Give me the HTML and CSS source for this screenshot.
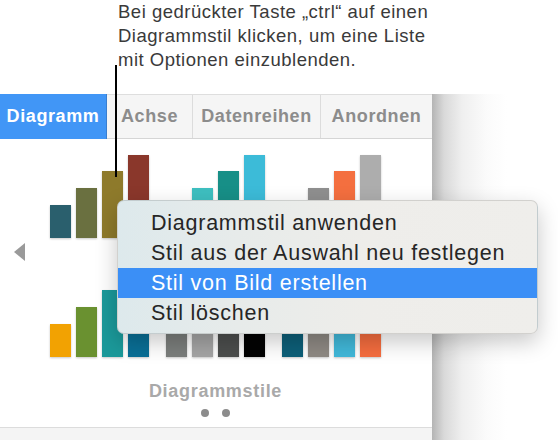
FILE: index.html
```html
<!DOCTYPE html>
<html lang="de">
<head>
<meta charset="utf-8">
<title>Diagrammstile</title>
<link rel="stylesheet" href="styles.css">
</head>
<body>
<div class="page">
  <div class="callout">Bei gedrückter Taste „ctrl“ auf einen<br>Diagrammstil klicken, um eine Liste<br>mit Optionen einzublenden.</div>
  <div class="main">
    <div class="panel">
      <div class="tabs">
        <div class="tab tab-active tab-1">Diagramm</div>
        <div class="tab tab-2">Achse</div>
        <div class="tab tab-3">Datenreihen</div>
        <div class="tab tab-4">Anordnen</div>
      </div>
      <div class="content">
        <div class="nav"><span class="arrow"></span></div>
        <div class="styles">
          <div class="grid">
            <div class="group">
              <span class="bar h1 c-1a"></span><span class="bar h2 c-1b"></span><span class="bar h3 c-1c"></span><span class="bar h4 c-1d"></span>
            </div>
            <div class="group">
              <span class="bar h1 c-2a"></span><span class="bar h2 c-2b"></span><span class="bar h3 c-2c"></span><span class="bar h4 c-2d"></span>
            </div>
            <div class="group">
              <span class="bar h1 c-3a"></span><span class="bar h2 c-3b"></span><span class="bar h3 c-3c"></span><span class="bar h4 c-3d"></span>
            </div>
            <div class="group">
              <span class="bar h1 c-4a"></span><span class="bar h2 c-4b"></span><span class="bar h3 c-4c"></span><span class="bar h4 c-4d"></span>
            </div>
            <div class="group">
              <span class="bar h1 c-5a"></span><span class="bar h2 c-5b"></span><span class="bar h3 c-5c"></span><span class="bar h4 c-5d"></span>
            </div>
            <div class="group">
              <span class="bar h1 c-6a"></span><span class="bar h2 c-6b"></span><span class="bar h3 c-6c"></span><span class="bar h4 c-6d"></span>
            </div>
          </div>
          <div class="label">Diagrammstile</div>
          <div class="dots"><span class="dot"></span><span class="dot"></span></div>
        </div>
      </div>
      <div class="footer"></div>
    </div>
    <div class="shade"></div>
  </div>
  <div class="pointer"></div>
  <div class="menu">
    <div class="item">Diagrammstil anwenden</div>
    <div class="item">Stil aus der Auswahl neu festlegen</div>
    <div class="item item-active">Stil von Bild erstellen</div>
    <div class="item">Stil löschen</div>
  </div>
</div>
</body>
</html>
```
FILE: styles.css
```css
html, body {
  margin: 0;
  padding: 0;
  background: #ffffff;
}
body {
  width: 558px;
  height: 440px;
  overflow: hidden;
  font-family: "Liberation Sans", Arial, sans-serif;
}
.page {
  position: relative;
  width: 558px;
  height: 440px;
}
.callout {
  height: 94px;
  box-sizing: border-box;
  padding-left: 118px;
  padding-top: 0;
  font-size: 18.5px;
  line-height: 24px;
  letter-spacing: 0.5px;
  color: #3a3a3a;
}
.main {
  display: flex;
  height: 346px;
}
.panel {
  width: 432px;
  display: flex;
  flex-direction: column;
  background: #ffffff;
}
.shade {
  flex: 1;
  background: linear-gradient(to right, #b4b4b4 0px, #d9d9d9 12px, #efefef 30px, #fbfbfb 55px, #ffffff 75px);
}
.tabs {
  display: flex;
  height: 45px;
  box-sizing: border-box;
  border-top: 1px solid #dedede;
  border-bottom: 1px solid #d5d5d5;
  background: #f5f5f5;
}
.tab {
  display: flex;
  align-items: center;
  justify-content: center;
  font-size: 18px;
  font-weight: bold;
  letter-spacing: 0.6px;
  color: #8c8c8c;
  border-left: 1px solid #dcdcdc;
}
.tab-active {
  background: #4196f6;
  color: #ffffff;
  border-left: none;
  margin-top: -1px;
  margin-bottom: -1px;
  border-right: 1px solid #3a7fd0;
}
.tab-1 { width: 106px; }
.tab-2 { width: 85px; border-left: none; }
.tab-3 { width: 127px; }
.tab-4 { flex: 1; }
.content {
  flex: 1;
  display: flex;
}
.nav {
  width: 49px;
}
.arrow {
  display: block;
  margin-top: 104px;
  margin-left: 14px;
  width: 0;
  height: 0;
  border-top: 9px solid transparent;
  border-bottom: 9px solid transparent;
  border-right: 11px solid #9a9a9a;
}
.styles {
  width: 333px;
  display: flex;
  flex-direction: column;
  align-items: center;
  padding-top: 15px;
}
.grid {
  display: grid;
  grid-template-columns: repeat(3, 99px);
  column-gap: 17px;
  row-gap: 35px;
}
.group {
  display: flex;
  align-items: flex-end;
  gap: 5px;
  height: 84px;
}
.bar {
  display: block;
  width: 21px;
  box-shadow: 0 1px 2px rgba(0, 0, 0, 0.22);
}
.h1 { height: 33px; }
.h2 { height: 50px; }
.h3 { height: 67px; }
.h4 { height: 83px; }
.c-1a { background: #2a5f6d; }
.c-1b { background: #6a7040; }
.c-1c { background: #8e7a2b; }
.c-1d { background: #8a372b; }
.c-2a { background: #2c8b98; }
.c-2b { background: #3ebfc0; }
.c-2c { background: #178f87; }
.c-2d { background: #3cbbd8; }
.c-3a { background: #6f6f6f; }
.c-3b { background: #8f8f8f; }
.c-3c { background: #f46f3f; }
.c-3d { background: #adadad; }
.c-4a { background: #f2a202; }
.c-4b { background: #6a9130; }
.c-4c { background: #1b999a; }
.c-4d { background: #0a6f96; }
.c-5a { background: #7b7e7c; }
.c-5b { background: #a4a4a4; }
.c-5c { background: #4c4e4d; }
.c-5d { background: #030303; }
.c-6a { background: #0d5f78; }
.c-6b { background: #8e8983; }
.c-6c { background: #41b8d9; }
.c-6d { background: #f56d3f; }
.label {
  margin-top: 24px;
  font-size: 18px;
  line-height: 20px;
  font-weight: bold;
  letter-spacing: 0.7px;
  color: #a9a9a9;
}
.dots {
  display: flex;
  gap: 13px;
  margin-top: 8px;
}
.dot {
  display: block;
  width: 8px;
  height: 8px;
  border-radius: 50%;
  background: #8c8c8c;
}
.footer {
  height: 13px;
  box-sizing: border-box;
  border-top: 1px solid #dcdcdc;
  background: #f4f4f4;
}
.pointer {
  position: absolute;
  left: 115px;
  top: 65px;
  width: 2px;
  height: 112px;
  background: #000000;
}
.menu {
  position: absolute;
  left: 117px;
  top: 200px;
  width: 421px;
  height: 134px;
  box-sizing: border-box;
  padding-top: 7px;
  border-radius: 7px;
  border: 1px solid rgba(0, 0, 0, 0.12);
  background: linear-gradient(to right, #dde9ec 0px, #e7ebea 120px, #eeedea 250px, #efeeeb 100%);
  box-shadow: 0 8px 22px rgba(0, 0, 0, 0.22);
  overflow: hidden;
}
.item {
  height: 30px;
  line-height: 30px;
  padding-left: 33px;
  font-size: 21.5px;
  letter-spacing: 0.75px;
  color: #262626;
}
.item-active {
  background: #3b8ff6;
  color: #ffffff;
}
```
